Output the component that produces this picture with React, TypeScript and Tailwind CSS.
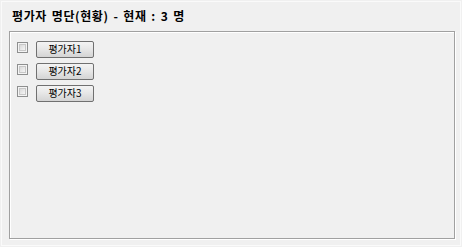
const evaluators = ["평가자1", "평가자2", "평가자3"];

const CheckBox = () => {
  return (
    <span className="mt-[1px] flex h-[11px] w-[11px] shrink-0 border border-[#8e8f8f] bg-[#f4f4f4] p-px">
      <span className="h-full w-full border border-[#c8c8c8] bg-gradient-to-br from-[#d9d9d9] to-[#f6f6f6]" />
    </span>
  );
};

const App = () => {
  return (
    <div className="h-[247px] w-[462px] bg-[#f0f0f0] p-px font-['Noto_Sans_CJK_KR','Noto_Sans',sans-serif] text-black">
      <div className="flex h-full w-full flex-col border border-[#fafafa]">
        <div className="flex h-[29px] items-center pb-[2px] pl-[10px] text-[12px] font-bold leading-none tracking-[0.6px] [word-spacing:1.5px]">
          평가자 명단(현황) - 현재 : 3 명
        </div>
        <div className="ml-[7px] h-[208px] w-[446px] border border-[#a0a0a0] shadow-[inset_1px_1px_0_#ffffff,1px_1px_0_#ffffff]">
          <div className="flex flex-col gap-[5px] pl-[7px] pt-[9px]">
            {evaluators.map((name) => (
              <div key={name} className="flex items-start gap-[8px]">
                <CheckBox />
                <button className="flex h-[17px] w-[58px] items-center justify-center rounded-[2px] border border-[#707070] bg-gradient-to-b from-[#f4f4f4] via-[#e6e6e6] to-[#d4d4d4] pb-px text-[10px] leading-none">
                  {name}
                </button>
              </div>
            ))}
          </div>
        </div>
      </div>
    </div>
  );
};

export default App;
